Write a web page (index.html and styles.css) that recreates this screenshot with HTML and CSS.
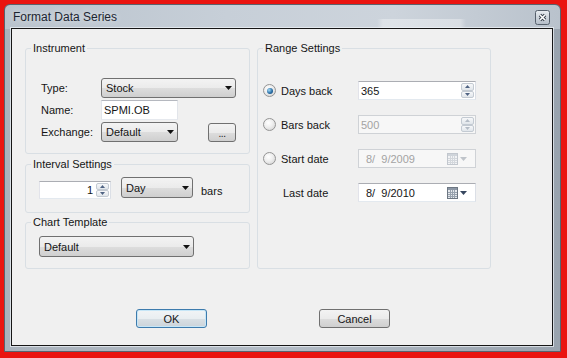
FILE: index.html
```html
<!DOCTYPE html>
<html>
<head>
<meta charset="utf-8">
<title>Format Data Series</title>
<link rel="stylesheet" href="styles.css">
</head>
<body>
<div class="window">
  <div class="titlebar">
    <span class="title">Format Data Series</span>
    <span class="close">
      <svg width="15" height="15" viewBox="0 0 15 15">
        <defs><linearGradient id="cg" x1="0" y1="0" x2="0" y2="1"><stop offset="0" stop-color="#e9edf1"/><stop offset="1" stop-color="#b3bcc7"/></linearGradient></defs>
        <rect x=".5" y=".5" width="14" height="14" rx="2" fill="url(#cg)" stroke="#56606c"/>
        <path d="M5 5l5 5M10 5l-5 5" stroke="#38414c" stroke-width="3.4"/>
        <path d="M5 5l5 5M10 5l-5 5" stroke="#fff" stroke-width="1.6"/>
      </svg>
    </span>
  </div>
  <div class="client">
    <div class="panels">
      <div class="leftcol">
        <fieldset class="group g-instr">
          <legend>Instrument</legend>
          <div class="irow">
            <span class="lbl">Type:</span>
            <div class="combo w-type"><span>Stock</span><svg class="arr" width="7" height="4" viewBox="0 0 7 4"><path d="M0 0h7L3.5 4z" fill="#111"/></svg></div>
          </div>
          <div class="irow">
            <span class="lbl">Name:</span>
            <div class="textbox w-name">SPMI.OB</div>
          </div>
          <div class="irow">
            <span class="lbl">Exchange:</span>
            <div class="combo w-exch"><span>Default</span><svg class="arr" width="7" height="4" viewBox="0 0 7 4"><path d="M0 0h7L3.5 4z" fill="#111"/></svg></div>
            <div class="btn dots">...</div>
          </div>
        </fieldset>
        <fieldset class="group g-int">
          <legend>Interval Settings</legend>
          <div class="introw">
            <div class="spin w-num">
              <span class="val">1</span>
              <div class="spinbtns">
                <span class="sb"><svg width="5" height="3" viewBox="0 0 5 3"><path d="M0 3h5L2.5 0z" fill="#4f6383"/></svg></span>
                <span class="sb"><svg width="5" height="3" viewBox="0 0 5 3"><path d="M0 0h5L2.5 3z" fill="#4f6383"/></svg></span>
              </div>
            </div>
            <div class="combo w-day"><span>Day</span><svg class="arr" width="7" height="4" viewBox="0 0 7 4"><path d="M0 0h7L3.5 4z" fill="#111"/></svg></div>
            <span class="bars">bars</span>
          </div>
        </fieldset>
        <fieldset class="group g-chart">
          <legend>Chart Template</legend>
          <div class="combo w-tpl"><span>Default</span><svg class="arr" width="7" height="4" viewBox="0 0 7 4"><path d="M0 0h7L3.5 4z" fill="#111"/></svg></div>
        </fieldset>
      </div>
      <fieldset class="group g-range">
        <legend>Range Settings</legend>
        <div class="rrow">
          <span class="radio on"></span>
          <span class="rlbl">Days back</span>
          <div class="spin w-range">
            <span class="val left">365</span>
            <div class="spinbtns">
              <span class="sb"><svg width="5" height="3" viewBox="0 0 5 3"><path d="M0 3h5L2.5 0z" fill="#4f6383"/></svg></span>
              <span class="sb"><svg width="5" height="3" viewBox="0 0 5 3"><path d="M0 0h5L2.5 3z" fill="#4f6383"/></svg></span>
            </div>
          </div>
        </div>
        <div class="rrow">
          <span class="radio"></span>
          <span class="rlbl">Bars back</span>
          <div class="spin w-range dis">
            <span class="val left">500</span>
            <div class="spinbtns">
              <span class="sb"><svg width="5" height="3" viewBox="0 0 5 3"><path d="M0 3h5L2.5 0z" fill="#b4bcc6"/></svg></span>
              <span class="sb"><svg width="5" height="3" viewBox="0 0 5 3"><path d="M0 0h5L2.5 3z" fill="#b4bcc6"/></svg></span>
            </div>
          </div>
        </div>
        <div class="rrow">
          <span class="radio"></span>
          <span class="rlbl">Start date</span>
          <div class="date w-range dis">
            <span class="dval">8/  9/2009</span>
            <svg class="cal" width="11" height="12" viewBox="0 0 11 12"><rect x=".5" y=".5" width="10" height="11" fill="#f2f3f5" stroke="#c2c7ce"/><rect x="1" y="1" width="9" height="2" fill="#cfd4da"/><path d="M1 5.5h9M1 7.5h9M1 9.5h9M3.5 3v8M5.5 3v8M7.5 3v8" stroke="#d3d7dc"/></svg>
            <svg class="darr" width="7" height="4" viewBox="0 0 7 4"><path d="M0 0h7L3.5 4z" fill="#bfc4ca"/></svg>
          </div>
        </div>
        <div class="rrow">
          <span class="radio blank"></span>
          <span class="rlbl last">Last date</span>
          <div class="date w-range">
            <span class="dval">8/  9/2010</span>
            <svg class="cal" width="11" height="12" viewBox="0 0 11 12"><rect x=".5" y=".5" width="10" height="11" fill="#e6e9ed" stroke="#6d7783"/><rect x="1" y="1" width="9" height="2" fill="#8c97a5"/><path d="M1 5.5h9M1 7.5h9M1 9.5h9M3.5 3v8M5.5 3v8M7.5 3v8" stroke="#98a2ae"/></svg>
            <svg class="darr" width="7" height="4" viewBox="0 0 7 4"><path d="M0 0h7L3.5 4z" fill="#36465e"/></svg>
          </div>
        </div>
      </fieldset>
    </div>
    <div class="btnrow">
      <div class="btn push default">OK</div>
      <div class="btn push">Cancel</div>
    </div>
  </div>
</div>
</body>
</html>
```

FILE: styles.css
```css
* { box-sizing: border-box; }
html, body { margin: 0; padding: 0; }
body {
  width: 567px;
  height: 358px;
  overflow: hidden;
  background: #ea1410;
  font-family: "Liberation Sans", Arial, sans-serif;
  font-size: 11px;
  color: #151515;
}
.window {
  margin: 4px 0 0 4px;
  width: 557px;
  height: 348px;
  border: 1px solid #59626d;
  border-radius: 6px 6px 0 0;
  padding: 0 7px 5px 6px;
  display: flex;
  flex-direction: column;
  background:
    linear-gradient(to right, rgba(255,255,255,0) 0, rgba(255,255,255,0) 372px, rgba(255,255,255,.35) 378px, rgba(255,255,255,.35) 455px, rgba(255,255,255,0) 461px) 0 14px / 100% 10px no-repeat,
    linear-gradient(to right, #b9c3cd 0, #c7cfd8 40%, #cdd4dc 70%, #b9c2cc 100%) 0 0 / 100% 24px no-repeat,
    linear-gradient(to right, #a9b2bc, #b3bcc6 50%, #99a3ae);
}
.titlebar {
  height: 23px;
  flex: none;
  display: flex;
  align-items: center;
  justify-content: space-between;
  padding: 0 3px 0 2px;
}
.title {
  font-size: 12px;
  color: #1d2631;
  text-shadow: 0 0 6px rgba(255,255,255,.8);
}
.close {
  width: 15px;
  height: 15px;
  display: flex;
  margin-top: 1px;
}
.client {
  flex: none;
  width: 542px;
  height: 318px;
  border: 1px solid #161616;
  background: #f0f0f0;
  box-shadow: 0 0 0 1px rgba(240,244,248,.7);
}
.panels {
  display: flex;
  padding: 13px 0 0 13px;
}
.leftcol {
  width: 225px;
  display: flex;
  flex-direction: column;
}
.group {
  margin: 0;
  min-width: 0;
  border: 1px solid #d9dfe4;
  border-radius: 3px;
  padding: 0 0 0 5px;
}
.group legend {
  padding: 0 2px;
  line-height: 13px;
  font-size: 11px;
}
.g-instr { height: 112px; padding-top: 23px; }
.g-int { height: 55px; margin-top: 4px; padding-top: 5px; }
.g-chart { height: 53px; margin-top: 3px; padding-top: 7px; }
.g-range { width: 234px; height: 227px; margin-left: 7px; padding-top: 26px; }

.irow {
  display: flex;
  align-items: center;
  height: 20px;
  margin-left: 10px;
}
.irow + .irow { margin-top: 2px; }
.lbl { width: 60px; }

.combo {
  display: flex;
  align-items: center;
  justify-content: space-between;
  height: 20px;
  border: 1px solid #707070;
  border-radius: 3px;
  background: linear-gradient(#f3f3f3 0, #ebebeb 50%, #dddddd 51%, #cfcfcf 100%);
  padding: 0 3px 0 4px;
}
.arr { flex: none; }
.w-type { width: 135px; }
.w-exch { width: 77px; }
.w-day { width: 72px; height: 21px; margin-left: 10px; }
.w-tpl { width: 155px; height: 21px; margin-left: 8px; }

.textbox {
  height: 20px;
  background: #fff;
  border: 1px solid;
  border-color: #b5b8bf #e2e5ea #e6e9ee #e2e5ea;
  padding: 0 2px;
  display: flex;
  align-items: center;
}
.w-name { width: 77px; }

.btn {
  border: 1px solid #707070;
  border-radius: 3px;
  background: linear-gradient(#f3f3f3 0, #ebebeb 50%, #dddddd 51%, #cfcfcf 100%);
  display: flex;
  align-items: center;
  justify-content: center;
}
.dots {
  width: 28px;
  height: 19px;
  margin-left: 30px;
  padding-top: 2px;
  font-size: 10px;
  letter-spacing: -0.5px;
}

.introw {
  display: flex;
  align-items: flex-end;
  height: 22px;
  margin-left: 8px;
}
.spin {
  display: flex;
  align-items: center;
  justify-content: flex-end;
  background: #fff;
  border: 1px solid;
  border-color: #abadb3 #dbdfe6 #e3e9ef #e2e3ea;
}
.w-num { width: 72px; height: 18px; margin-bottom: -1px; }
.val { padding-right: 3px; }
.val.left { margin-right: auto; padding-left: 2px; }
.spinbtns {
  display: flex;
  flex-direction: column;
  width: 14px;
  height: 100%;
  padding: 1px 1px 1px 0;
}
.sb {
  flex: 1;
  display: flex;
  align-items: center;
  justify-content: center;
  border: 1px solid #c3cad2;
  border-radius: 2px;
  background: linear-gradient(#f7f8fa, #e1e6eb);
}
.bars { margin-left: 8px; line-height: 13px; }

.rrow {
  display: flex;
  align-items: center;
  height: 19px;
}
.rrow + .rrow { margin-top: 15px; }
.radio {
  flex: none;
  width: 13px;
  height: 13px;
  margin-right: 5px;
  border: 1px solid #949494;
  border-radius: 50%;
  background: radial-gradient(circle at 40% 35%, #ffffff 0, #eeeeee 45%, #cdcdcd 100%);
  display: flex;
  align-items: center;
  justify-content: center;
}
.radio.on::after {
  content: "";
  width: 6px;
  height: 6px;
  border-radius: 50%;
  background: radial-gradient(circle at 35% 35%, #a6dcf8 0, #2a6fa6 55%, #103e6c 100%);
}
.radio.blank { visibility: hidden; }
.rlbl { width: 77px; }
.rlbl.last { margin-left: 2px; width: 75px; }
.w-range { width: 118px; height: 19px; }
.date {
  display: flex;
  align-items: center;
  background: #fff;
  border: 1px solid;
  border-color: #abadb3 #dbdfe6 #e3e9ef #e2e3ea;
  padding: 0 8px 0 7px;
}
.dval { white-space: pre; margin-right: auto; }
.cal { flex: none; }
.darr { flex: none; margin-left: 2px; }
.dis {
  background: #f7f7f7;
  border-color: #cfd2d6;
  color: #a3a3a3;
}

.btnrow {
  display: flex;
  gap: 112px;
  padding-left: 124px;
  margin-top: 40px;
}
.push { width: 71px; height: 19px; }
.push.default {
  border-color: #3d7bad;
  box-shadow: inset 0 0 0 1px #c6e6f7;
  background: linear-gradient(#f1f4f6 0, #e9eef1 50%, #d9e0e5 51%, #ccd4da 100%);
}
```
